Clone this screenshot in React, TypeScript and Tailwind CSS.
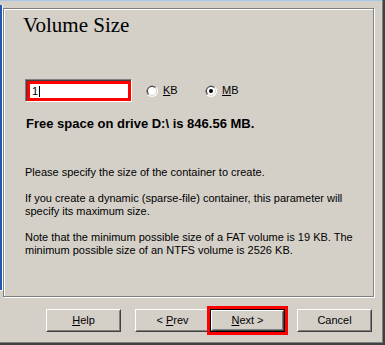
import React from "react";

function Radio({ checked }: { checked?: boolean }) {
  return (
    <svg width="12" height="12" viewBox="0 0 12 12" className="block shrink-0">
      <circle cx="6" cy="6" r="6" fill="#ffffff" />
      <path d="M1.76 10.24 A6 6 0 0 1 10.24 1.76 Z" fill="#808080" />
      <circle cx="6" cy="6" r="5" fill="#d4d0c8" />
      <path d="M2.46 9.54 A5 5 0 0 1 9.54 2.46 Z" fill="#404040" />
      <circle cx="6" cy="6" r="4" fill="#ffffff" />
      {checked && <circle cx="6" cy="6" r="2" fill="#000000" />}
    </svg>
  );
}

function Bevel({ children }: { children: React.ReactNode }) {
  return (
    <div className="flex-1 flex border border-t-white border-l-white border-r-[#404040] border-b-[#404040]">
      <div className="flex-1 flex items-center justify-center border border-t-[#d4d0c8] border-l-[#d4d0c8] border-r-[#808080] border-b-[#808080] text-[11px] leading-[13px] text-black">
        {children}
      </div>
    </div>
  );
}

function Button({ children }: { children: React.ReactNode }) {
  return (
    <div className="w-[75px] h-[23px] flex">
      <Bevel>{children}</Bevel>
    </div>
  );
}

export default function App() {
  return (
    <div className="w-[385px] h-[345px] bg-[#d4d0c8] border-r-2 border-b-2 border-[#404040] font-['Liberation_Sans',Arial,sans-serif] text-black overflow-hidden">
      <div className="w-full h-full flex flex-col border-r border-b border-[#808080]">
        <div className="h-px bg-[#a6c8ec] shrink-0" />
        <div className="flex shrink-0">
          <div className="mt-[4px] w-[3px] h-[286px] bg-[#2158b5] border-r border-b border-white shrink-0" />
          <div className="mt-[7px] w-[371px] h-[289px] border border-[#808080] shadow-[1px_1px_0_#ffffff,inset_1px_1px_0_#ffffff] flex flex-col shrink-0">
            <div className="mt-[4px] ml-[19px] h-[24px] leading-[24px] text-[21px] font-['Liberation_Serif','Times_New_Roman',serif]">
              Volume Size
            </div>
            <div className="mt-[42px] ml-[21px] h-[23px] flex items-center">
              <div className="w-[107px] h-[23px] flex border border-t-[#808080] border-l-[#808080] border-r-white border-b-white">
                <div className="flex-1 flex border-t border-l border-[#404040]">
                  <div className="flex-1 flex items-center bg-white border-[3px] border-[#ff0000] pl-[2px]">
                    <span className="text-[11px] leading-[13px]">1</span>
                    <span className="ml-[1px] w-px h-[11px] bg-black" />
                  </div>
                </div>
              </div>
              <div className="ml-[14px] w-[59px] flex items-center">
                <Radio />
                <span className="ml-[5px] text-[11px] leading-[13px]">
                  <span className="underline">K</span>B
                </span>
              </div>
              <div className="flex items-center">
                <Radio checked />
                <span className="ml-[5px] text-[11px] leading-[13px]">
                  <span className="underline">M</span>B
                </span>
              </div>
            </div>
            <div className="mt-[14px] ml-[22px] text-[13px] leading-[16px] font-bold">
              Free space on drive D:\ is 846.56 MB.
            </div>
            <div className="mt-[34px] ml-[21px] text-[11px] leading-[13px] flex flex-col gap-[13px]">
              <p>Please specify the size of the container to create.</p>
              <p>
                If you create a dynamic (sparse-file) container, this parameter will
                <br />
                specify its maximum size.
              </p>
              <p>
                Note that the minimum possible size of a FAT volume is 19 KB. The
                <br />
                minimum possible size of an NTFS volume is 2526 KB.
              </p>
            </div>
          </div>
        </div>
        <div className="mt-[12px] pl-[46px] flex shrink-0">
          <Button>
            <span>
              <span className="underline">H</span>elp
            </span>
          </Button>
          <div className="ml-[14px]">
            <Button>
              <span>
                &lt; <span className="underline">P</span>rev
              </span>
            </Button>
          </div>
          <div className="w-[75px] h-[23px] flex border border-black outline-[3px] outline-solid outline-[#ff0000]">
            <Bevel>
              <span>
                <span className="underline">N</span>ext &gt;
              </span>
            </Bevel>
          </div>
          <div className="ml-[12px]">
            <Button>Cancel</Button>
          </div>
        </div>
      </div>
    </div>
  );
}
